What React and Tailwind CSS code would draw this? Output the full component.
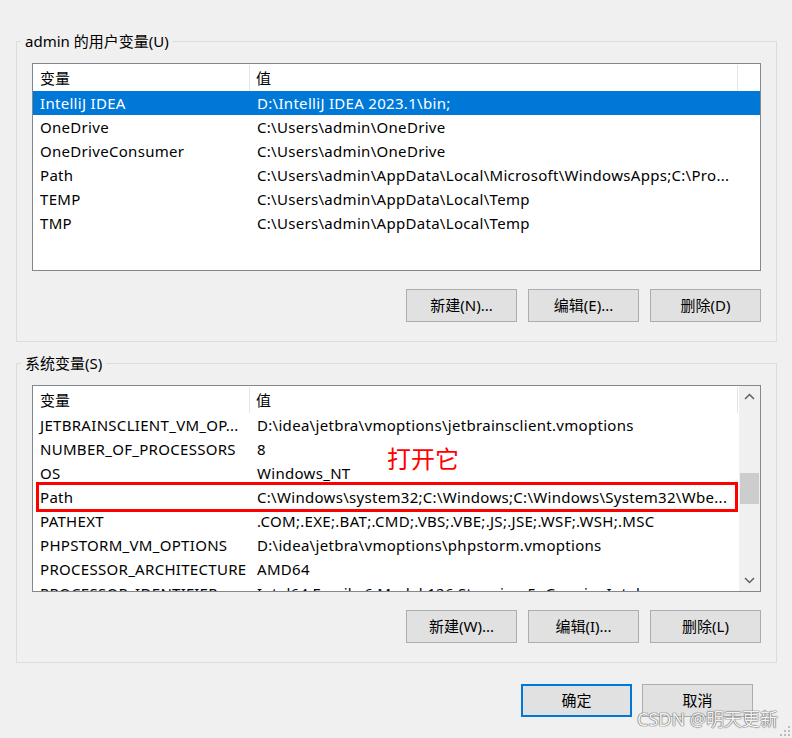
import React from 'react';

const userVars = [
  ['IntelliJ IDEA', 'D:\\IntelliJ IDEA 2023.1\\bin;'],
  ['OneDrive', 'C:\\Users\\admin\\OneDrive'],
  ['OneDriveConsumer', 'C:\\Users\\admin\\OneDrive'],
  ['Path', 'C:\\Users\\admin\\AppData\\Local\\Microsoft\\WindowsApps;C:\\Pro...'],
  ['TEMP', 'C:\\Users\\admin\\AppData\\Local\\Temp'],
  ['TMP', 'C:\\Users\\admin\\AppData\\Local\\Temp'],
];

const systemVars = [
  ['JETBRAINSCLIENT_VM_OP...', 'D:\\idea\\jetbra\\vmoptions\\jetbrainsclient.vmoptions'],
  ['NUMBER_OF_PROCESSORS', '8'],
  ['OS', 'Windows_NT'],
  ['Path', 'C:\\Windows\\system32;C:\\Windows;C:\\Windows\\System32\\Wbe...'],
  ['PATHEXT', '.COM;.EXE;.BAT;.CMD;.VBS;.VBE;.JS;.JSE;.WSF;.WSH;.MSC'],
  ['PHPSTORM_VM_OPTIONS', 'D:\\idea\\jetbra\\vmoptions\\phpstorm.vmoptions'],
  ['PROCESSOR_ARCHITECTURE', 'AMD64'],
  ['PROCESSOR_IDENTIFIER', 'Intel64 Family 6 Model 126 Stepping 5, GenuineIntel'],
];

const Chevron = ({ up }) => (
  <svg width="11" height="7" viewBox="0 0 11 7" fill="none">
    <polyline
      points={up ? '1,6 5.5,1.5 10,6' : '1,1 5.5,5.5 10,1'}
      stroke="#606060"
      strokeWidth="1.5"
    />
  </svg>
);

const Header = () => (
  <div className="flex h-[27px] shrink-0 items-center pt-[1px]">
    <div className="flex h-full w-[217px] items-center border-r border-[#e5e5e5] pl-[7px]">变量</div>
    <div className="flex h-full w-[488px] items-center border-r border-[#e5e5e5] pl-[6px]">值</div>
  </div>
);

const Row = ({ name, value, selected, marked }) => (
  <div
    className={`relative flex h-[24px] shrink-0 items-center whitespace-nowrap tracking-[0.3px] ${
      selected ? 'bg-[#0078d7] text-white' : ''
    }`}
  >
    <div className="w-[217px] overflow-hidden pl-[7px]">{name}</div>
    <div className="w-[488px] overflow-hidden pl-[7px]">{value}</div>
    {marked && (
      <div className="absolute left-[3px] right-[1px] top-[-3px] bottom-[-3px] border-[3px] border-[#ff0000]" />
    )}
  </div>
);

const Button = ({ children, primary }) => (
  <button
    className={`flex h-[33px] w-[111px] items-center justify-center bg-[#e1e1e1] text-[15px] text-black ${
      primary ? 'border-2 border-[#0078d7]' : 'border border-[#adadad]'
    }`}
  >
    {children}
  </button>
);

const GroupBox = ({ title, children, className = '' }) => (
  <fieldset className={`w-[761px] border border-[#dcdcdc] px-[15px] pb-[19px] ${className}`}>
    <legend className="ml-[-11px] px-[4px] text-[15px] leading-[20px]">{title}</legend>
    {children}
  </fieldset>
);

export default function App() {
  return (
    <div className="relative h-[738px] w-[792px] overflow-hidden bg-[#f0f0f0] pl-[16px] pt-[31px] text-[15px] text-black font-['Noto_Sans','Noto_Sans_CJK_SC',sans-serif]">
      <GroupBox title="admin 的用户变量(U)">
        <div className="mt-[12px] flex h-[208px] w-[729px] flex-col overflow-hidden border border-[#828790] bg-white">
          <Header />
          {userVars.map(([n, v], i) => (
            <Row key={n} name={n} value={v} selected={i === 0} />
          ))}
        </div>
        <div className="mt-[18px] flex justify-end gap-[11px]">
          <Button>新建(N)...</Button>
          <Button>编辑(E)...</Button>
          <Button>删除(D)</Button>
        </div>
      </GroupBox>

      <GroupBox title="系统变量(S)" className="mt-[11px]">
        <div className="relative mt-[12px] flex h-[207px] w-[729px] overflow-hidden border border-[#828790] bg-white">
          <div className="flex w-[706px] flex-col">
            <Header />
            {systemVars.map(([n, v]) => (
              <Row key={n} name={n} value={v} marked={n === 'Path'} />
            ))}
          </div>
          <div className="flex w-[21px] flex-col bg-[#f0f0f0]">
            <div className="flex h-[21px] items-center justify-center">
              <Chevron up />
            </div>
            <div className="flex-1">
              <div className="mx-[1px] mt-[66px] h-[31px] bg-[#cdcdcd]" />
            </div>
            <div className="flex h-[21px] items-center justify-center">
              <Chevron />
            </div>
          </div>
          <div className="absolute left-[354px] top-[59px] text-[24px] leading-[28px] text-[#ff0000]">打开它</div>
        </div>
        <div className="mt-[18px] flex justify-end gap-[11px]">
          <Button>新建(W)...</Button>
          <Button>编辑(I)...</Button>
          <Button>删除(L)</Button>
        </div>
      </GroupBox>

      <div className="mt-[21px] flex w-[737px] justify-end gap-[10px]">
        <Button primary>确定</Button>
        <Button>取消</Button>
      </div>

      <div className="absolute bottom-[8px] right-[14px] text-[18px] leading-[22px] text-[#f2f2f2] [text-shadow:0_0_1px_#666,0_0_1px_#666,0_0_1px_#666]">
        CSDN @明天更新
      </div>
      <svg className="absolute bottom-[1px] right-[1px]" width="12" height="12" viewBox="0 0 12 12">
        <rect x="9" y="1" width="2" height="2" fill="#bcbcbc" />
        <rect x="5" y="5" width="2" height="2" fill="#bcbcbc" />
        <rect x="9" y="5" width="2" height="2" fill="#bcbcbc" />
        <rect x="1" y="9" width="2" height="2" fill="#bcbcbc" />
        <rect x="5" y="9" width="2" height="2" fill="#bcbcbc" />
        <rect x="9" y="9" width="2" height="2" fill="#bcbcbc" />
      </svg>
    </div>
  );
}
